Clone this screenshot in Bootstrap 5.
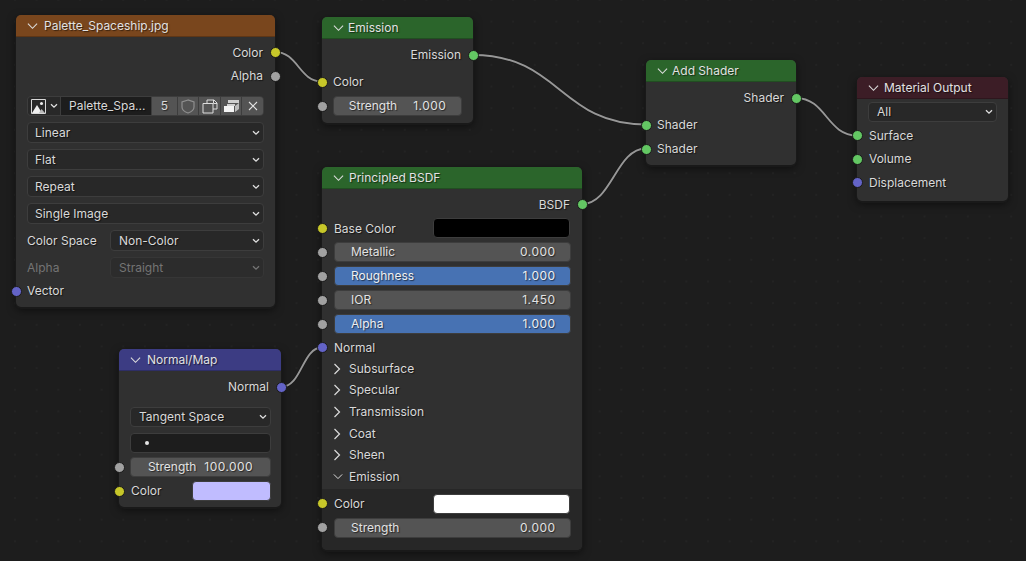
<!DOCTYPE html>
<html lang="en">
<head>
<meta charset="utf-8">
<title>Shader nodes</title>
<link href="https://cdn.jsdelivr.net/npm/bootstrap@5.3.0/dist/css/bootstrap.min.css" rel="stylesheet">
<style>
html,body{margin:0;height:100%;background:#1d1d1d;overflow:hidden}
.canvas{position:relative;width:1026px;height:561px;background-color:#1d1d1d;font-family:Inter,"Liberation Sans",sans-serif;font-size:12px;color:#d9d9d9;line-height:14px;text-shadow:1px 1px 1px rgba(0,0,0,.55);
background-image:radial-gradient(circle at 1px 1px,#232323 .9px,transparent 1.2px);background-size:21.67px 21.67px;background-position:14px 20.6px}
.wires{position:absolute;left:0;top:0}
.bnode{position:absolute;background:#303030;border-radius:5px;box-shadow:0 1px 0 1px #191919,0 3px 8px rgba(0,0,0,.55)}
.n-img{left:16px;top:15px;width:259px;height:292px}
.n-emi{left:322px;top:17px;width:151px;height:106px}
.n-add{left:646px;top:60px;width:150px;height:105px}
.n-out{left:857px;top:77px;width:151px;height:124px}
.n-bsdf{left:322px;top:167px;width:260px;height:383px}
.n-map{left:119px;top:349px;width:162px;height:158px}
.nhead{height:22px;padding-left:11px;gap:5px;border-radius:5px 5px 0 0;border-bottom:1px solid rgba(0,0,0,.22);color:#e2e2e2}
.n-img .nhead,.n-map .nhead{gap:6px}
.n-emi .nhead,.n-add .nhead{gap:4px}
.h-tex{background:#79461d}
.h-shd{background:#2b652b}
.h-out{background:#3c1d26}
.h-vec{background:#3c3c83}
.nrow{position:relative;height:24px;padding:0 12px 0 11px}
.n-out .nrow,.n-bsdf .nrow,.n-map .nrow{padding-left:12px}
.lbl-low{position:relative;top:.5px}
.r-head{margin-top:3px}
.r-head4{margin-top:4px}
.r-t3{margin-top:3px}
.r-t1{margin-top:1px}
.r-t2{margin-top:2px}
.r235{height:23.5px}
.r23{height:23px}
.sock{position:absolute;top:50%;width:9px;height:9px;margin-top:-5.5px;border-radius:50%;border:1px solid #1a1a1a;box-sizing:content-box}
.sock.sl{left:-5.5px}
.sock.sr{right:-5.5px}
.s-y{background:#c7c729}.s-g{background:#a1a1a1}.s-n{background:#63c763}.s-p{background:#6363c7}
.wstack{padding:0 11px}
.n-bsdf .wstack{padding:0 11.500px 0 12px}
.n-map .wstack{padding:0 10px 0 11px}
.wid{height:20px;border-radius:4px;border:1px solid #3d3d3d;box-sizing:border-box;padding:0 3px 0 8px;background:#282828}
.wid svg{flex:none}
.n-img .wid{height:21px;margin-top:6px;padding-left:7px}
.n-map .wgap8{margin-top:8px}
.wnum{background:#545454;padding:0 14px 0 16px;color:#e2e2e2}
.wblue{background:#4772b3;padding:0 14px 0 16px;color:#f0f0f0}
.val{letter-spacing:.45px}
.wcen{justify-content:center;padding:0 4px}
.n-img .wid.wdim{background:#2c2c2c;color:#747474;border-color:#363636;text-shadow:none}
.lbl-dim{color:#747474;text-shadow:none}
.sw{height:20px;border-radius:4px;border:1px solid #3d3d3d;box-sizing:border-box}
.sw-w{width:137px}
.sw-m{width:79px;background:#c0bcff;margin-right:-2px}
.idrow{height:20px;margin-top:8px;border-radius:4px;border:1px solid #3d3d3d;overflow:hidden;background:#3d3d3d;gap:1px;box-sizing:border-box}
.idrow>div{height:100%}
.id-ic{width:32px;background:#282828;gap:4px;padding-left:3px}
.id-name{width:90px;background:#1d1d1d;padding-left:8px}
.id-b{background:#545454;justify-content:center}
.idw25{width:25px}.idw20{width:20px}.idw21{width:21px}.idw22{flex:1}
.lblcol{width:83px;flex:none}
.n-img .twocol .sel{flex:1;margin-top:0;padding-left:8px}
.twocol{height:21px;margin-top:6px}
.pan{height:21.6px;padding-left:11px;gap:8px}
.pan-open{gap:6px}
.pan svg{flex:none}
.pans{margin-top:-1px}
.dark{background:#272727;border-radius:0 0 5px 5px;margin-top:1.400px;padding-top:3px;height:61px}
.txtfield{background:#1d1d1d;height:20px;margin-top:6px;padding-left:14px;border-radius:4px;border:1px solid #3d3d3d;box-sizing:border-box}
.dotc{width:4px;height:4px;border-radius:50%;background:#e6e6e6}
.mt4{margin-top:4px}
.mt2{margin-top:2px}
</style>
</head>
<body>
<div class="canvas">
<svg class="wires" width="1026" height="561" fill="none">
  <g stroke="#191919" stroke-width="3.2" stroke-linecap="round">
    <path d="M275 52C298 52 299 81.500 322 81.500"/>
    <path d="M473 55C560 55 560 124.500 646 124.500"/>
    <path d="M582 204C612 204 616 148.500 646 148.500"/>
    <path d="M796 98C826 98 827 135.500 857 135.500"/>
    <path d="M281 387C302 387 302 347.500 322 347.500"/>
  </g>
  <g stroke="#979797" stroke-width="1.900" stroke-linecap="round">
    <path d="M275 52C298 52 299 81.500 322 81.500"/>
    <path d="M473 55C560 55 560 124.500 646 124.500"/>
    <path d="M582 204C612 204 616 148.500 646 148.500"/>
    <path d="M796 98C826 98 827 135.500 857 135.500"/>
    <path d="M281 387C302 387 302 347.500 322 347.500"/>
  </g>
</svg>
<svg width="0" height="0" class="position-absolute">
  <symbol id="cd" viewBox="0 0 12 8"><path d="M1 1.500 6 6.500 11 1.500" fill="none" stroke="#dcdcdc" stroke-width="1.200"/></symbol>
  <symbol id="cr" viewBox="0 0 8 12"><path d="M1.500 1 6.500 6 1.500 11" fill="none" stroke="#dcdcdc" stroke-width="1.200"/></symbol>
  <symbol id="cs" viewBox="0 0 8 6"><path d="M1 1.200 4 4.200 7 1.200" fill="none" stroke="#e0e0e0" stroke-width="1.300"/></symbol>
</svg>

<!-- Image texture -->
<div class="bnode n-img">
  <div class="nhead h-tex d-flex align-items-center"><svg width="11" height="8"><use href="#cd"/></svg><span>Palette_Spaceship.jpg</span></div>
  <div class="nrow r-head d-flex align-items-center justify-content-end"><span class="lbl-low">Color</span><i class="sock sr s-y"></i></div>
  <div class="nrow d-flex align-items-center justify-content-end"><span>Alpha</span><i class="sock sr s-g"></i></div>
  <div class="wstack">
    <div class="idrow d-flex">
      <div class="id-ic d-flex align-items-center">
        <svg width="15" height="15" viewBox="0 0 15 15"><path d="M.5.5h14v14H.5z" fill="none" stroke="#d8d8d8"/><path d="M1 14 6 6l5 8z" fill="#eee"/><path d="M8 14l2.500-4 3.500 4z" fill="#bbb"/><circle cx="10.500" cy="4.500" r="1.500" fill="#eee"/></svg>
        <svg width="8" height="6"><use href="#cs"/></svg>
      </div>
      <div class="id-name d-flex align-items-center">Palette_Spa...</div>
      <div class="id-b idw25 d-flex align-items-center">5</div>
      <div class="id-b idw20 d-flex align-items-center"><svg width="14" height="15" viewBox="0 0 14 15"><path d="M7 1 1 3v5c0 3 3 5 6 6 3-1 6-3 6-6V3z" fill="none" stroke="#8f8f8f" stroke-width="1.200"/></svg></div>
      <div class="id-b idw21 d-flex align-items-center"><svg width="16" height="15" viewBox="0 0 16 15"><path d="M5 4V1h7l3 3v6h-4M1 4.500h10V14H1z" fill="none" stroke="#dcdcdc"/><path d="M11.500 1v3.500H15" fill="none" stroke="#dcdcdc"/></svg></div>
      <div class="id-b idw20 d-flex align-items-center"><svg width="17" height="14" viewBox="0 0 17 14"><path d="M5 1h11v3H5z" fill="#cfcfcf"/><path d="M4 5h8v2H4z" fill="#cfcfcf"/><path d="M1 7h10v6H1z" fill="#f4f4f4"/><path d="M12 7l4-3v6l-4 3z" fill="#bdbdbd"/></svg></div>
      <div class="id-b idw22 d-flex align-items-center"><svg width="10" height="10" viewBox="0 0 10 10"><path d="M1 1l8 8M9 1l-8 8" stroke="#e0e0e0" stroke-width="1.100"/></svg></div>
    </div>
    <div class="wid d-flex align-items-center justify-content-between"><span>Linear</span><svg width="8" height="6"><use href="#cs"/></svg></div>
    <div class="wid d-flex align-items-center justify-content-between"><span>Flat</span><svg width="8" height="6"><use href="#cs"/></svg></div>
    <div class="wid d-flex align-items-center justify-content-between"><span>Repeat</span><svg width="8" height="6"><use href="#cs"/></svg></div>
    <div class="wid d-flex align-items-center justify-content-between"><span>Single Image</span><svg width="8" height="6"><use href="#cs"/></svg></div>
    <div class="twocol d-flex align-items-center"><span class="lblcol">Color Space</span><div class="wid sel d-flex align-items-center justify-content-between"><span>Non-Color</span><svg width="8" height="6"><use href="#cs"/></svg></div></div>
    <div class="twocol d-flex align-items-center"><span class="lblcol lbl-dim">Alpha</span><div class="wid sel wdim d-flex align-items-center justify-content-between"><span>Straight</span><svg width="8" height="6" opacity=".4"><use href="#cs"/></svg></div></div>
  </div>
  <div class="nrow r-t1 d-flex align-items-center"><i class="sock sl s-p"></i><span>Vector</span></div>
</div>

<!-- Emission -->
<div class="bnode n-emi">
  <div class="nhead h-shd d-flex align-items-center"><svg width="11" height="8"><use href="#cd"/></svg><span>Emission</span></div>
  <div class="nrow r-head4 d-flex align-items-center justify-content-end"><span>Emission</span><i class="sock sr s-n"></i></div>
  <div class="nrow r-t3 d-flex align-items-center"><i class="sock sl s-y"></i><span>Color</span></div>
  <div class="wstack position-relative mt2"><i class="sock sl s-g"></i><div class="wid wnum wcen gap-3 d-flex align-items-center"><span>Strength</span><span class="val">1.000</span></div></div>
</div>

<!-- Add shader -->
<div class="bnode n-add">
  <div class="nhead h-shd d-flex align-items-center"><svg width="11" height="8"><use href="#cd"/></svg><span>Add Shader</span></div>
  <div class="nrow r-head4 d-flex align-items-center justify-content-end"><span>Shader</span><i class="sock sr s-n"></i></div>
  <div class="nrow r-t3 d-flex align-items-center"><i class="sock sl s-n"></i><span>Shader</span></div>
  <div class="nrow d-flex align-items-center"><i class="sock sl s-n"></i><span>Shader</span></div>
</div>

<!-- Material output -->
<div class="bnode n-out">
  <div class="nhead h-out d-flex align-items-center"><svg width="11" height="8"><use href="#cd"/></svg><span>Material Output</span></div>
  <div class="wstack r-t3"><div class="wid d-flex align-items-center justify-content-between"><span>All</span><svg width="8" height="6"><use href="#cs"/></svg></div></div>
  <div class="nrow r235 r-t2 d-flex align-items-center"><i class="sock sl s-n"></i><span>Surface</span></div>
  <div class="nrow r235 d-flex align-items-center"><i class="sock sl s-n"></i><span>Volume</span></div>
  <div class="nrow r235 d-flex align-items-center"><i class="sock sl s-p"></i><span>Displacement</span></div>
</div>

<!-- Principled BSDF -->
<div class="bnode n-bsdf">
  <div class="nhead h-shd d-flex align-items-center"><svg width="11" height="8"><use href="#cd"/></svg><span>Principled BSDF</span></div>
  <div class="nrow r-head d-flex align-items-center justify-content-end"><span class="lbl-low">BSDF</span><i class="sock sr s-n"></i></div>
  <div class="nrow d-flex align-items-center justify-content-between"><i class="sock sl s-y"></i><span class="lbl-low">Base Color</span><div class="sw bg-black sw-w"></div></div>
  <div class="wstack position-relative mt2"><i class="sock sl s-g"></i><div class="wid wnum d-flex align-items-center justify-content-between"><span>Metallic</span><span class="val">0.000</span></div></div>
  <div class="wstack position-relative mt4"><i class="sock sl s-g"></i><div class="wid wblue d-flex align-items-center justify-content-between"><span>Roughness</span><span class="val">1.000</span></div></div>
  <div class="wstack position-relative mt4"><i class="sock sl s-g"></i><div class="wid wnum d-flex align-items-center justify-content-between"><span>IOR</span><span class="val">1.450</span></div></div>
  <div class="wstack position-relative mt4"><i class="sock sl s-g"></i><div class="wid wblue d-flex align-items-center justify-content-between"><span>Alpha</span><span class="val">1.000</span></div></div>
  <div class="nrow r23 r-t2 d-flex align-items-center"><i class="sock sl s-p"></i><span>Normal</span></div>
  <div class="pans">
    <div class="pan d-flex align-items-center"><svg width="8" height="12"><use href="#cr"/></svg><span>Subsurface</span></div>
    <div class="pan d-flex align-items-center"><svg width="8" height="12"><use href="#cr"/></svg><span>Specular</span></div>
    <div class="pan d-flex align-items-center"><svg width="8" height="12"><use href="#cr"/></svg><span>Transmission</span></div>
    <div class="pan d-flex align-items-center"><svg width="8" height="12"><use href="#cr"/></svg><span>Coat</span></div>
    <div class="pan d-flex align-items-center"><svg width="8" height="12"><use href="#cr"/></svg><span>Sheen</span></div>
    <div class="pan pan-open d-flex align-items-center"><svg width="10" height="7"><use href="#cd"/></svg><span>Emission</span></div>
  </div>
  <div class="dark">
    <div class="nrow d-flex align-items-center justify-content-between"><i class="sock sl s-y"></i><span>Color</span><div class="sw bg-white sw-w"></div></div>
    <div class="wstack position-relative mt2"><i class="sock sl s-g"></i><div class="wid wnum d-flex align-items-center justify-content-between"><span>Strength</span><span class="val">0.000</span></div></div>
  </div>
</div>

<!-- Normal map -->
<div class="bnode n-map">
  <div class="nhead h-vec d-flex align-items-center"><svg width="11" height="8"><use href="#cd"/></svg><span>Normal/Map</span></div>
  <div class="nrow r-head4 d-flex align-items-center justify-content-end"><span>Normal</span><i class="sock sr s-p"></i></div>
  <div class="wstack">
    <div class="wid wgap8 d-flex align-items-center justify-content-between"><span>Tangent Space</span><svg width="8" height="6"><use href="#cs"/></svg></div>
    <div class="txtfield d-flex align-items-center"><span class="dotc"></span></div>
  </div>
  <div class="wstack position-relative mt4"><i class="sock sl s-g"></i><div class="wid wnum wcen gap-2 d-flex align-items-center"><span>Strength</span><span class="val">100.000</span></div></div>
  <div class="nrow r-t2 d-flex align-items-center justify-content-between"><i class="sock sl s-y"></i><span>Color</span><div class="sw sw-m"></div></div>
</div>
</div>
</body>
</html>
